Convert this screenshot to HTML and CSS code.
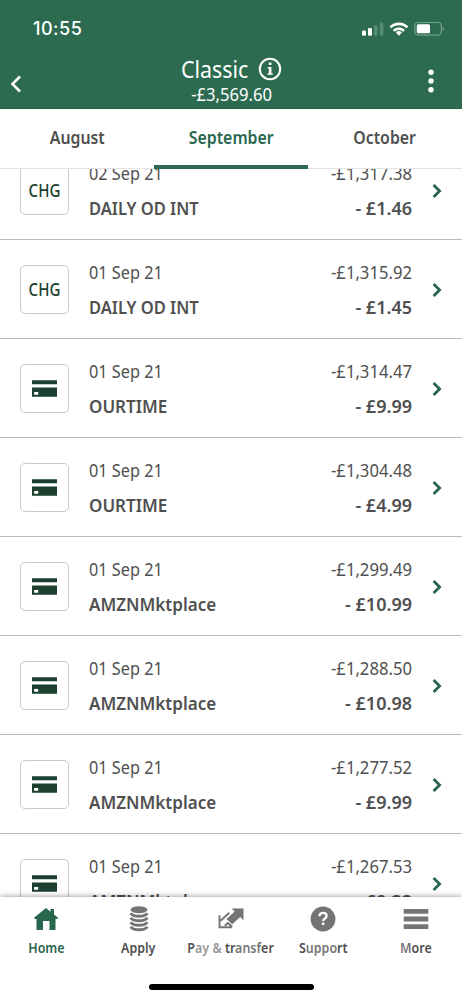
FILE: index.html
```html
<!DOCTYPE html>
<html lang="en">
<head>
<meta charset="utf-8">
<title>Classic</title>
<link rel="stylesheet" href="styles.css">
</head>
<body>
<svg class="defs" width="0" height="0">
  <symbol id="card" viewBox="0 0 24 16"><path d="M0 0h24v4H0zM0 7h24v9H0z" fill="#1b4030"/><path d="M2 11.300h4v2.700H2z" fill="#fff"/></symbol>
  <symbol id="chev" viewBox="0 0 10 14"><path d="M1.600 1l6 6-6 6" fill="none" stroke="#28664e" stroke-width="2.800"/></symbol>
</svg>
<div class="screen">
  <header class="top">
    <div class="status">
      <span class="time">10:55</span>
      <svg class="signals" width="84" height="16" viewBox="0 0 84 16">
        <g fill="#fff"><rect x="0" y="9.500" width="4" height="5.200" rx="1.200"/><rect x="6" y="7" width="4" height="7.700" rx="1.200"/></g>
        <g fill="#558c74"><rect x="12" y="4" width="3.500" height="10.700" rx="1"/><rect x="17.800" y="1.500" width="3.500" height="13.200" rx="1"/></g>
        <g fill="none" stroke="#fff" stroke-width="2.600"><path d="M28.400 6.400a12 12 0 0 1 17 0"/><path d="M31.700 9.800a7.300 7.300 0 0 1 10.400 0"/></g>
        <path d="M33.900 11.500a4.300 4.300 0 0 1 6 0L36.900 14.700z" fill="#fff"/>
        <rect x="52.900" y="1.500" width="26.400" height="12.600" rx="3.500" fill="none" stroke="#729f8b" stroke-width="1.200"/>
        <rect x="54.800" y="3.300" width="13.200" height="9" rx="1.500" fill="#fff"/>
        <path d="M80.600 5.800q3 2 0 4z" fill="#729f8b"/>
      </svg>
    </div>
    <div class="titlebar">
      <svg class="back" width="12" height="18" viewBox="0 0 12 18"><path d="M10 1.500L2.500 9l7.500 7.500" fill="none" stroke="#fff" stroke-width="2.600"/></svg>
      <div class="account">
        <div class="title"><span class="t-title">Classic</span>
          <svg width="24" height="24" viewBox="0 0 24 24"><circle cx="12" cy="12" r="10.200" fill="none" stroke="#fff" stroke-width="2"/><path d="M10.800 5.600h2.600v2.500h-2.600zM9.700 10h3.700v6.300h1.300v1.500H9.500v-1.500h1.400v-4.800H9.700z" fill="#fff"/></svg>
        </div>
        <div class="t-total">-£3,569.60</div>
      </div>
      <svg class="dots" width="6" height="24" viewBox="0 0 6 24" fill="#fff"><circle cx="3" cy="3.300" r="2.700"/><circle cx="3" cy="12" r="2.700"/><circle cx="3" cy="20.700" r="2.700"/></svg>
    </div>
  </header>
  <nav class="tabs">
    <div class="tab"><span>August</span></div>
    <div class="tab on"><span>September</span></div>
    <div class="tab"><span>October</span></div>
  </nav>
  <main class="list">
    <div class="row"><div class="tile"><span>CHG</span></div><div class="desc"><span>02 Sep 21</span><b class="caps">DAILY OD INT</b></div><div class="sums"><span>-£1,317.38</span><b>- £1.46</b></div><svg class="go"><use href="#chev"/></svg></div>
    <div class="row"><div class="tile"><span>CHG</span></div><div class="desc"><span>01 Sep 21</span><b class="caps">DAILY OD INT</b></div><div class="sums"><span>-£1,315.92</span><b>- £1.45</b></div><svg class="go"><use href="#chev"/></svg></div>
    <div class="row"><div class="tile"><svg class="card"><use href="#card"/></svg></div><div class="desc"><span>01 Sep 21</span><b>OURTIME</b></div><div class="sums"><span>-£1,314.47</span><b>- £9.99</b></div><svg class="go"><use href="#chev"/></svg></div>
    <div class="row"><div class="tile"><svg class="card"><use href="#card"/></svg></div><div class="desc"><span>01 Sep 21</span><b>OURTIME</b></div><div class="sums"><span>-£1,304.48</span><b>- £4.99</b></div><svg class="go"><use href="#chev"/></svg></div>
    <div class="row"><div class="tile"><svg class="card"><use href="#card"/></svg></div><div class="desc"><span>01 Sep 21</span><b>AMZNMktplace</b></div><div class="sums"><span>-£1,299.49</span><b>- £10.99</b></div><svg class="go"><use href="#chev"/></svg></div>
    <div class="row"><div class="tile"><svg class="card"><use href="#card"/></svg></div><div class="desc"><span>01 Sep 21</span><b>AMZNMktplace</b></div><div class="sums"><span>-£1,288.50</span><b>- £10.98</b></div><svg class="go"><use href="#chev"/></svg></div>
    <div class="row"><div class="tile"><svg class="card"><use href="#card"/></svg></div><div class="desc"><span>01 Sep 21</span><b>AMZNMktplace</b></div><div class="sums"><span>-£1,277.52</span><b>- £9.99</b></div><svg class="go"><use href="#chev"/></svg></div>
    <div class="row"><div class="tile"><svg class="card"><use href="#card"/></svg></div><div class="desc"><span>01 Sep 21</span><b>AMZNMktplace</b></div><div class="sums"><span>-£1,267.53</span><b>- £9.33</b></div><svg class="go"><use href="#chev"/></svg></div>
  </main>
  <footer class="bottom">
    <div class="item on">
      <svg width="26" height="26" viewBox="0 0 26 26" fill="#28664e"><path d="M13 2l4.500 3.700V3H21v5.500l4 3.300-.8 1.200H22.500v11h-6v-9h-6.500v9H3.500V13H1.800L1 11.800z"/></svg>
      <span>Home</span>
    </div>
    <div class="item">
      <svg width="26" height="26" viewBox="0 0 26 26"><ellipse cx="13" cy="3.800" rx="8.500" ry="3.500" fill="#747474"/><g fill="none" stroke="#747474" stroke-width="2.900"><path d="M4.600 7.300q2 3 8.400 3t8.400-3"/><path d="M4.600 11.800q2 3 8.400 3t8.400-3"/><path d="M4.600 16.300q2 3 8.400 3t8.400-3"/><path d="M4.600 20.800q2 3 8.400 3t8.400-3"/></g></svg>
      <span>Apply</span>
    </div>
    <div class="item">
      <svg width="26" height="26" viewBox="0 0 26 26"><path d="M13.500 2.500h12V14.300l-3.300-3.200-8 7.200-5.700-5.400 8.200-7.400z" fill="#747474"/><path d="M11.300 6.700L2.500 14.700M1.500 9.200v12h12.300M14.300 20.800L9.800 17l-3 2.800" fill="none" stroke="#747474" stroke-width="1.900"/></svg>
      <span>P<i>ay</i> <i>&amp;</i> tr<em>ansf</em>er</span>
    </div>
    <div class="item">
      <svg width="26" height="26" viewBox="0 0 26 26"><circle cx="13" cy="13" r="12.400" fill="#747474"/><path d="M9.500 10.200q.2-3.300 3.600-3.300 3.500 0 3.500 2.900 0 1.700-1.700 2.700-1.700 1-1.700 2.500" fill="none" stroke="#fff" stroke-width="2.300"/><path d="M11.900 16.500h2.500V19h-2.500z" fill="#fff"/></svg>
      <span>S<em>uppo</em>rt</span>
    </div>
    <div class="item">
      <svg width="26" height="26" viewBox="0 0 26 26" fill="#747474"><path d="M.7 3h24.600v4.800H.7zM.7 10.600h24.600v4.800H.7zM.7 18.200h24.600V23H.7z"/></svg>
      <span><em>M</em>ore</span>
    </div>
    <div class="homebar"></div>
  </footer>
</div>
</body>
</html>
```
FILE: styles.css
```css
* { box-sizing: border-box; }
body { margin: 0; background: #fff; font-family: "Noto Sans", sans-serif; color: #505050; }
svg { display: block; flex: none; }
.defs { position: absolute; }
.screen { width: 462px; height: 1000px; display: flex; flex-direction: column; overflow: hidden; }

.top { height: 109px; flex: none; background: #2d6b50; color: #fff; border-bottom: 1px solid #286047; }
.status { display: flex; justify-content: space-between; padding: 17px 18px 0 33px; height: 56px; }
.time { font: 500 18px/24px Inter, sans-serif; letter-spacing: 0.5px; }
.signals { margin-top: 4px; margin-right: -2px; }
.titlebar { display: flex; justify-content: space-between; padding: 0 28px 0 10px; }
.back { margin-top: 19px; }
.dots { margin-top: 13px; }
.account { width: 200px; display: flex; flex-direction: column; align-items: center; margin-left: 13px; }
.title { display: flex; align-items: center; gap: 5px; height: 26px; font-size: 23px; line-height: 26px; }
.t-title { transform: scaleX(.93); transform-origin: left; }
.t-total { font-size: 17.500px; line-height: 24px; white-space: nowrap; transform: scaleX(.95); }

.tabs { height: 60px; flex: none; display: grid; grid-template-columns: repeat(3, 1fr); border-bottom: 1px solid #e3e3e3; }
.tab { text-align: center; font-size: 18px; font-weight: 600; line-height: 57px; height: 60px; }
.tab span { display: inline-block; transform: scaleX(.88); }
.tab.on { color: #28664e; border-bottom: 4px solid #2d6b50; }

.list { height: 728px; flex: none; overflow: hidden; }
.row { height: 99px; display: flex; border-bottom: 1px solid #b9b9b9; padding: 0 20px; }
.row:first-child { margin-top: -28px; }
.tile { width: 49px; height: 49px; margin-top: 25px; padding-right: 1px; border: 1px solid #c8c8c8; border-radius: 5px; display: flex; align-items: center; justify-content: center; color: #1b4030; font-size: 17.500px; font-weight: 500; flex: none; }
.tile span { transform: scaleX(.86); padding-bottom: 2px; }
.card { width: 25px; height: 17px; }
.desc, .sums { display: flex; flex-direction: column; padding-top: 14px; font-size: 18.500px; line-height: 35px; white-space: nowrap; }
.desc { margin-left: 20px; flex: 1; align-items: flex-start; }
.desc span, .desc b { transform-origin: left; }
.desc span { transform: scaleX(.88); }
.desc b { transform: scaleX(.945); }
.desc b.caps { transform: scaleX(.917); }
.sums { align-items: flex-end; margin-right: 20px; }
.sums span, .sums b { transform-origin: right; }
.sums span { transform: scaleX(.9); }
.row b { font-size: 18px; line-height: 37px; font-weight: 600; }
.go { width: 10px; height: 14px; margin-top: 43px; }

.bottom { height: 103px; flex: none; position: relative; background: #fff; box-shadow: 0 -1px 5px rgba(0,0,0,.35); display: grid; grid-template-columns: repeat(5, minmax(0, 1fr)); padding-top: 9px; }
.item { display: flex; flex-direction: column; align-items: center; font-size: 14px; font-weight: 600; line-height: 20px; gap: 6px; white-space: nowrap; }
.item span { transform: scaleX(.89); }
.item.on { color: #28664e; }
.item i, .item em { font-style: normal; }
.item i { color: #999; }
.item em { color: #777; }
.homebar { position: absolute; left: 149px; top: 87px; width: 165px; height: 6px; border-radius: 3px; background: #000; }
```
